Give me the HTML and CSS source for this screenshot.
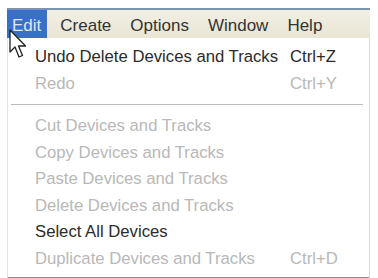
FILE: index.html
```html
<!DOCTYPE html>
<html>
<head>
<meta charset="utf-8">
<link rel="stylesheet" href="styles.css">
</head>
<body>
<div class="frame">
  <div class="menubar">
    <span class="top active">Edit</span>
    <span class="top">Create</span>
    <span class="top">Options</span>
    <span class="top">Window</span>
    <span class="top">Help</span>
  </div>
  <div class="menu">
    <div class="item"><span>Undo Delete Devices and Tracks</span><span class="key">Ctrl+Z</span></div>
    <div class="item dis"><span>Redo</span><span class="key">Ctrl+Y</span></div>
    <div class="sep"></div>
    <div class="item dis"><span>Cut Devices and Tracks</span></div>
    <div class="item dis"><span>Copy Devices and Tracks</span></div>
    <div class="item dis"><span>Paste Devices and Tracks</span></div>
    <div class="item dis"><span>Delete Devices and Tracks</span></div>
    <div class="item"><span>Select All Devices</span></div>
    <div class="item dis"><span>Duplicate Devices and Tracks</span><span class="key">Ctrl+D</span></div>
  </div>
  <svg class="cursor" width="20" height="32" viewBox="0 0 20 32">
    <path d="M1 1 L1 23 L6 18 L10 28 L13.5 26.5 L9.5 17 L16.5 17 Z" fill="#fff" stroke="#222" stroke-width="1.3" stroke-linejoin="round"/>
  </svg>
</div>
</body>
</html>
```
FILE: styles.css
```css
html, body { margin: 0; padding: 0; background: #fff; }
body { width: 378px; height: 278px; overflow: hidden; font-family: "Liberation Sans", Arial, sans-serif; }
.frame { position: relative; margin: 8px 0 0 7px; width: 363px; }
.menubar {
  display: flex; align-items: stretch; height: 28px;
  border-top: 2px solid #7d93ab;
  background: linear-gradient(#f1efe3, #e9e6d6);
  font-size: 17px; color: #333;
}
.top { display: flex; align-items: center; padding: 3px 9px 0 10px; }
.top.active { background: #3a6fc9; color: #dfe8f7; padding: 3px 6px 0 5px; margin-right: 3px; }
.menu {
  background: #fff; border-left: 1px solid #e3e3e3; border-right: 1px solid #dadada;
  border-bottom: 2px solid #8f8f8f; padding: 6px 0 8px; height: 225px;
}
.item { display: flex; align-items: center; height: 26.5px; padding-left: 27px; font-size: 16.7px; color: #2b2b2b; }
.item span:first-child { width: 255px; }
.item.dis { color: #b8b8b8; }
.key { color: inherit; }
.sep { height: 1px; background: #bcbcbc; margin: 7px 6px 8px 3px; }
.cursor { position: absolute; left: 2px; top: 21px; }
```
